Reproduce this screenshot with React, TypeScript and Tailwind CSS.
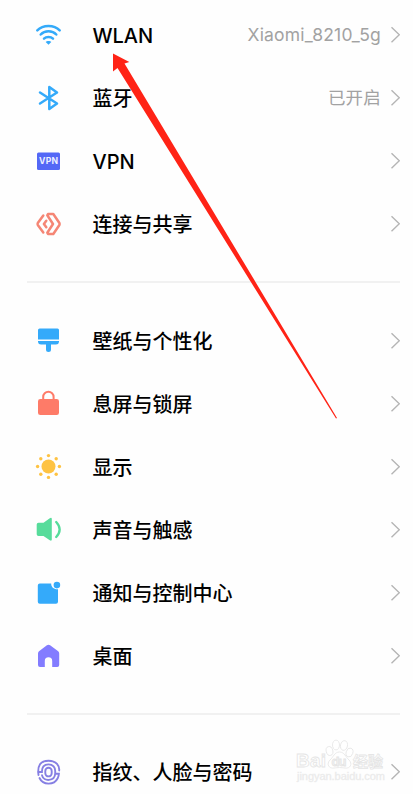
import type { ReactNode } from 'react';

const blue = '#34aafa';
const violet = '#837cff';

function Icon({ children }: { children: ReactNode }) {
  return (
    <svg viewBox="0 0.5 30 30" className="h-[30px] w-[30px] shrink-0" fill="none">
      {children}
    </svg>
  );
}

const WifiIcon = () => (
  <Icon>
    <g stroke={blue} strokeWidth="2.500" strokeLinecap="round">
      <path d="M4.300 10.800C10 4.900 21 4.900 26.700 10.800" />
      <path d="M7.700 15c4-4.300 11.600-4.300 15.600 0" />
      <path d="M11 19.100c2.300-2.300 6.700-2.300 9 0" />
    </g>
    <path d="M12.700 22.400c1.200-1.300 4.400-1.300 5.600 0L15.500 25.200z" fill={blue} />
  </Icon>
);

const BluetoothIcon = () => (
  <Icon>
    <path d="M7 10L24 21L16.300 26.500V4.500L24 10L7 21" stroke={blue} strokeWidth="2.500" strokeLinecap="round" strokeLinejoin="round" />
  </Icon>
);

const VpnIcon = () => (
  <Icon>
    <rect x="4" y="7" width="23" height="17.500" rx="1.500" fill="#5468f6" />
    <text x="15.700" y="18.800" textAnchor="middle" fontSize="8.600" fontWeight="700" letterSpacing="0.300" fill="#eef0ff" fontFamily="Inter, sans-serif">VPN</text>
  </Icon>
);

const ShareIcon = () => (
  <Icon>
    <g stroke="#f58675" strokeWidth="2.500" strokeLinejoin="round" strokeLinecap="round">
      <path d="M10.300 7L4.800 14.600Q4.300 15.500 4.800 16.400L10.300 24" />
      <path d="M15 5.500H20.300L26.400 14.500Q26.900 15.500 26.400 16.500L20.300 25.500H15L14.300 24.200L20 15.500L14.300 6.800z" />
      <path d="M13.300 12.200L10.900 15.500L13.300 18.800" />
    </g>
  </Icon>
);

const BrushIcon = () => (
  <Icon>
    <path d="M6.700 3H24.500Q26 3 26 4.500V14H5V4.500Q5 3 6.700 3z" fill={blue} />
    <path d="M5 15.600H26V16.500Q25.700 19 23 19H18V24Q18 26.500 15.500 26.500T13 24V19H8Q5.300 19 5 16.500z" fill={blue} />
  </Icon>
);

const LockIcon = () => (
  <Icon>
    <path d="M10.200 12V8.500a5.200 5.200 0 0 1 10.400 0V12" stroke="#fe7b68" strokeWidth="2" />
    <rect x="5" y="10.500" width="21" height="16" rx="2.300" fill="#fe7b68" />
  </Icon>
);

const SunIcon = () => (
  <Icon>
    <g fill="#fec343">
      <circle cx="15.500" cy="15" r="7" />
      <circle cx="15.500" cy="4.100" r="1.700" />
      <circle cx="15.500" cy="25.900" r="1.700" />
      <circle cx="4.600" cy="15" r="1.700" />
      <circle cx="26.400" cy="15" r="1.700" />
      <circle cx="7.800" cy="7.300" r="1.700" />
      <circle cx="23.200" cy="7.300" r="1.700" />
      <circle cx="7.800" cy="22.700" r="1.700" />
      <circle cx="23.200" cy="22.700" r="1.700" />
    </g>
  </Icon>
);

const SoundIcon = () => (
  <Icon>
    <path d="M5.500 8.200H10.500L16.800 3.700Q18.800 2.700 18.800 4.500V25Q18.800 26.800 16.800 25.800L10.500 21.500H5.500Q3.700 21.500 3.700 19.700V10Q3.700 8.200 5.500 8.200z" fill="#57dc9b" />
    <path d="M23.200 7.500C27.700 12.300 27.700 17.500 23.200 22.500" stroke="#57dc9b" strokeWidth="2.300" strokeLinecap="round" />
  </Icon>
);

const NoticeIcon = () => (
  <Icon>
    <path d="M6.800 6H18.200C18 9.500 20.800 12 25 11.800V24.300Q25 26.300 23 26.300H6.800Q4.800 26.300 4.800 24.300V8Q4.800 6 6.800 6z" fill={blue} />
    <circle cx="23.900" cy="7.600" r="3.300" fill={blue} />
  </Icon>
);

const HomeIcon = () => (
  <Icon>
    <path d="M13.900 4.700Q15.500 3.600 17.100 4.700L25.200 10.700Q26.200 11.600 26.200 13V24.500Q26.200 26.500 24.200 26.500H19.200V20.500a3.700 3.700 0 0 0-7.400 0V26.500H7Q5 26.500 5 24.500V13Q5 11.600 6 10.700z" fill={violet} />
  </Icon>
);

const FingerprintIcon = () => (
  <Icon>
    <g stroke="#867fe3" strokeWidth="1.900" strokeLinecap="round">
      <path d="M5.500 18.500C4.200 9 7.500 4.200 15.500 4.200S26.600 9.500 26.200 14" />
      <path d="M6.500 21.500C10 29 21 29 24.700 21.800Q25.700 20 25.900 17.300H23" />
      <path d="M5.500 15.500H8.900C8.700 10.800 11 7.900 15.500 7.900S22.300 11 22.200 14.500V17C21.800 25 10.500 25.500 9 18.800" />
      <rect x="12.300" y="11.300" width="6.400" height="8.600" rx="3.200" />
    </g>
  </Icon>
);

function Row({ icon, label, value }: { icon: ReactNode; label: string; value?: string }) {
  return (
    <li className="flex h-[63px] items-center pr-[13px] pl-[33px]">
      {icon}
      <span className="ml-[29.500px] pt-[2px] text-[20px] leading-[30px] font-medium whitespace-nowrap text-black">{label}</span>
      <span className="ml-auto pt-px text-[17.500px] leading-[26px] tracking-[0.2px] whitespace-nowrap text-[#a2a2a2]">{value}</span>
      <svg viewBox="0 0 10 18" className="ml-[9px] h-[18px] w-[10px] shrink-0" fill="none">
        <path d="M1.500 1.200L9.300 8.700L1.500 16.200" stroke="#b5b5b5" strokeWidth="1.400" />
      </svg>
    </li>
  );
}

const Divider = () => <hr className="mr-[13px] ml-[27px] border-0 border-t-2 border-[#f1f1f1]" />;

function Watermark() {
  return (
    <div className="pointer-events-none absolute top-[738px] left-[293px] h-[46px] w-[96px]">
      <svg viewBox="0 0 96 46" className="h-full w-full" fill="#ffffff" stroke="#e5e5e5" strokeWidth="0.800">
        <text x="3" y="29" fontSize="19" fontWeight="700" textLength="30" fontFamily="Liberation Sans, sans-serif">Bai</text>
        <ellipse cx="36.500" cy="13" rx="3.300" ry="4.500" transform="rotate(-15 36.500 13)" />
        <ellipse cx="43" cy="7" rx="3.500" ry="4.900" />
        <ellipse cx="51" cy="7.500" rx="3.500" ry="4.900" transform="rotate(12 51 7.500)" />
        <ellipse cx="56.500" cy="14.500" rx="3.300" ry="4.500" transform="rotate(18 56.500 14.500)" />
        <path d="M46.500 14C41.500 14 40.500 19 37 22C33 26 36 31 41 30Q46.500 29 52 30C57 31 60 26 56 22C52.500 19 51.500 14 46.500 14z" />
        <text x="38.500" y="27.500" fontSize="13" fontWeight="700" textLength="15" fill="#f2f2f2" fontFamily="Liberation Sans, sans-serif">du</text>
        <text x="60" y="28.500" fontSize="15" fontWeight="700" textLength="30" fontFamily="Noto Sans CJK SC, sans-serif">经验</text>
        <text x="4" y="42" fontSize="11" textLength="88" fill="#e9e9e9" stroke="#ededed" strokeWidth="0.300" fontFamily="Liberation Sans, sans-serif">jingyan.baidu.com</text>
      </svg>
    </div>
  );
}

export default function App() {
  return (
    <main className="relative h-[794px] w-[413px] overflow-hidden bg-[#fefefe] pt-[3px] font-['Inter','Noto_Sans_CJK_SC',sans-serif]">
      <ul>
        <Row icon={<WifiIcon />} label="WLAN" value="Xiaomi_8210_5g" />
        <Row icon={<BluetoothIcon />} label="蓝牙" value="已开启" />
        <Row icon={<VpnIcon />} label="VPN" />
        <Row icon={<ShareIcon />} label="连接与共享" />
      </ul>
      <div className="pt-[26px] pb-[26px]"><Divider /></div>
      <ul>
        <Row icon={<BrushIcon />} label="壁纸与个性化" />
        <Row icon={<LockIcon />} label="息屏与锁屏" />
        <Row icon={<SunIcon />} label="显示" />
        <Row icon={<SoundIcon />} label="声音与触感" />
        <Row icon={<NoticeIcon />} label="通知与控制中心" />
        <Row icon={<HomeIcon />} label="桌面" />
      </ul>
      <div className="pt-[26px] pb-[25px]"><Divider /></div>
      <ul>
        <Row icon={<FingerprintIcon />} label="指纹、人脸与密码" />
      </ul>
      <Watermark />
      <svg viewBox="0 0 413 794" className="pointer-events-none absolute inset-0 h-[794px] w-[413px]">
        <path d="M113 53.500L129.300 62L124.500 63.500L337 418L336 418.500L117.500 68L113 71.500z" fill="#ff2316" />
      </svg>
    </main>
  );
}
